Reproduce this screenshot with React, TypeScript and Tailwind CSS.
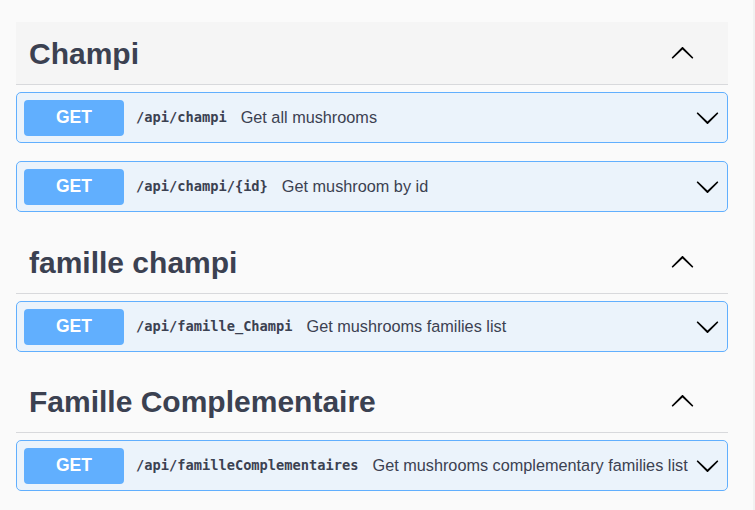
import React from "react";

const Arrow = ({ up }: { up?: boolean }) => (
  <svg
    width="25"
    height="25"
    viewBox="0 0 20 20"
    className={up ? "rotate-180" : ""}
    aria-hidden="true"
  >
    <path
      fill="#000"
      d="M17.418 6.109c.272-.268.709-.268.979 0s.271.701 0 .969l-7.908 7.83c-.27.268-.707.268-.979 0l-7.908-7.83c-.27-.268-.27-.701 0-.969.271-.268.709-.268.979 0L10 13.25l7.418-7.141z"
    />
  </svg>
);

const Op = ({ path, desc }: { path: string; desc: string }) => (
  <div className="flex h-[51px] items-center rounded-[5px] border border-[#61affe] bg-[#ebf3fb] pl-[7px] pr-[7px]">
    <div className="flex h-[36px] w-[100px] shrink-0 items-center justify-center rounded-[4px] bg-[#61affe] text-[17.5px] font-bold text-white [font-family:'Liberation_Sans',Arial,sans-serif]">
      GET
    </div>
    <div className="ml-[12px] text-[13.7px] font-bold text-[#3b4151] [font-family:'DejaVu_Sans_Mono',monospace]">
      {path}
    </div>
    <div className="ml-[14px] flex-1 whitespace-nowrap text-[16.25px] text-[#3b4151] [font-family:'Liberation_Sans',Arial,sans-serif]">
      {desc}
    </div>
    <Arrow />
  </div>
);

const Tag = ({ title, hover }: { title: string; hover?: boolean }) => (
  <div
    className={`flex h-[63px] items-center border-b border-[#d8d9dc] pl-[13px] pr-[33px] ${
      hover ? "bg-[#f5f5f5]" : ""
    }`}
  >
    <h3 className="flex-1 text-[30px] font-bold text-[#3b4151] [font-family:'Liberation_Sans',Arial,sans-serif]">
      {title}
    </h3>
    <Arrow up />
  </div>
);

export default function App() {
  return (
    <div className="flex h-[510px] w-[755px] bg-[#fafafa]">
      <div className="flex-1 pl-[16px] pr-[25px] pt-[22px]">
        <div className="mb-[19px]">
          <Tag title="Champi" hover />
          <div className="mt-[7px] flex flex-col gap-[18px]">
            <Op path="/api/champi" desc="Get all mushrooms" />
            <Op path="/api/champi/{id}" desc="Get mushroom by id" />
          </div>
        </div>
        <div className="mb-[18px]">
          <Tag title="famille champi" />
          <div className="mt-[7px] flex flex-col gap-[18px]">
            <Op path="/api/famille_Champi" desc="Get mushrooms families list" />
          </div>
        </div>
        <div>
          <Tag title="Famille Complementaire" />
          <div className="mt-[7px] flex flex-col gap-[18px]">
            <Op
              path="/api/familleComplementaires"
              desc="Get mushrooms complementary families list"
            />
          </div>
        </div>
      </div>
      <div className="w-[2px] bg-[#f1f1f1]" />
    </div>
  );
}
